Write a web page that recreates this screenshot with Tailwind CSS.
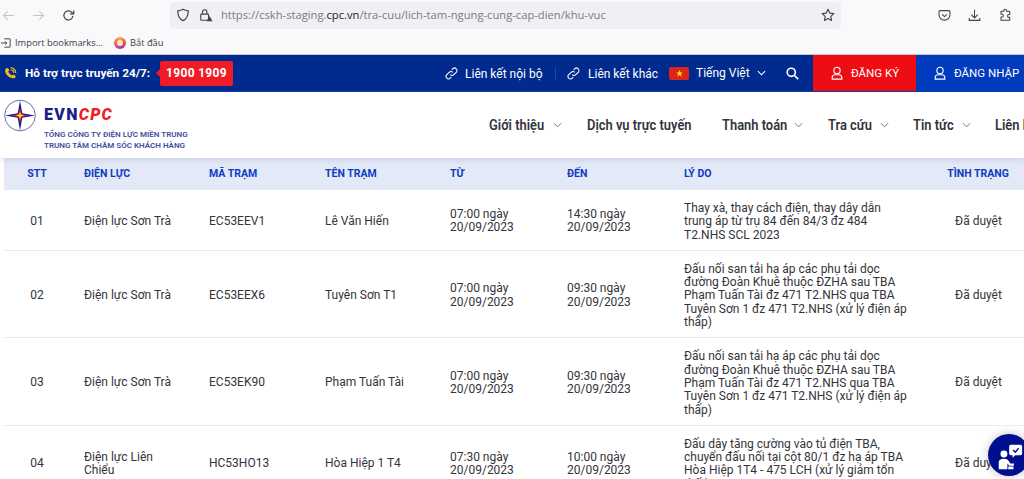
<!DOCTYPE html>
<html lang="vi">
<head>
    <meta charset="UTF-8">
    <title>Lịch tạm ngừng cung cấp điện</title>
    <script src="https://cdn.jsdelivr.net/npm/@tailwindcss/browser@4"></script>
</head>
<body class="bg-white font-['Roboto',sans-serif] antialiased">
    <div class="relative w-[1024px] h-[479px] overflow-hidden">
        <!-- Browser toolbar -->
        <div class="h-[55px] bg-[#f9f9fb] border-b border-[#c8c8cc] font-['Open_Sans',sans-serif]">
            <div class="h-[29px] pt-px flex items-center">
                <div class="w-[170px] pl-[2px] flex items-center text-[#6f6f73]">
                    <svg class="w-[13px] h-[13px] text-[#c4c4c8]" viewBox="0 0 16 16" fill="none" stroke="currentColor" stroke-width="1.3"><path d="M15 8H2M7 3 2 8l5 5"/></svg>
                    <svg class="w-[13px] h-[13px] ml-[17px] text-[#c4c4c8]" viewBox="0 0 16 16" fill="none" stroke="currentColor" stroke-width="1.3"><path d="M1 8h13M9 3l5 5-5 5"/></svg>
                    <svg class="w-[13px] h-[13px] ml-[17px] text-[#444]" viewBox="0 0 16 16" fill="none" stroke="currentColor" stroke-width="1.4"><path d="M13.5 8.5A5.6 5.6 0 1 1 12 4l2 2"/><path d="M14.5 1.5V6H10"/></svg>
                </div>
                <div class="w-[671px] h-[27px] bg-[#f0f0f4] rounded-[4px] flex items-center">
                    <svg class="w-[14px] h-[14px] ml-[6px] text-[#444]" viewBox="0 0 16 16" fill="none" stroke="currentColor" stroke-width="1.4"><path d="M8 1.5c2 1.2 4 1.6 6 1.7 0 5.5-1.800 9.500-6 11.300C3.800 12.700 2 8.700 2 3.200c2-.1 4-.5 6-1.700Z"/></svg>
                    <svg class="w-[14px] h-[14px] ml-[9px] text-[#444]" viewBox="0 0 16 16" fill="none" stroke="currentColor" stroke-width="1.3"><rect x="2" y="7" width="9" height="7" rx="1"/><path d="M4 7V4.500a2.500 2.500 0 0 1 5 0V7"/><path d="M12 9l3.500 6h-7Z" fill="currentColor" stroke="none"/></svg>
                    <span class="ml-[8px] text-[11.200px] text-[#7b7b80] whitespace-nowrap">https://cskh-staging.<span class="text-[#1c1c20]">cpc.vn</span>/tra-cuu/lich-tam-ngung-cung-cap-dien/khu-vuc</span>
                    <svg class="w-[14px] h-[14px] ml-auto mr-[6px] text-[#444]" viewBox="0 0 16 16" fill="none" stroke="currentColor" stroke-width="1.300" stroke-linejoin="round"><path d="m8 1.500 2 4.300 4.700.6-3.500 3.200.9 4.700L8 12l-4.100 2.300.9-4.700L1.300 6.400 6 5.800Z"/></svg>
                </div>
                <svg class="w-[13px] h-[13px] ml-[97px] text-[#444]" viewBox="0 0 16 16" fill="none" stroke="currentColor" stroke-width="1.300"><path d="M2.500 2h11c.8 0 1.200.5 1.200 1.200V7A6.700 6.700 0 0 1 1.300 7V3.200C1.300 2.500 1.700 2 2.500 2Z"/><path d="m5 6.500 3 2.800 3-2.800"/></svg>
                <svg class="w-[13px] h-[13px] ml-[17px] text-[#444]" viewBox="0 0 16 16" fill="none" stroke="currentColor" stroke-width="1.300"><path d="M8 1v9.500M4 7l4 4 4-4M1.500 11v3h13v-3"/></svg>
                <svg class="w-[13px] h-[14px] ml-[18px] text-[#444]" viewBox="0 0 16 16" fill="none" stroke="currentColor" stroke-width="1.300" stroke-linejoin="round"><path d="M6 3.500V2.600a1.600 1.600 0 0 1 3.200 0v.9h4v4h-1a1.700 1.700 0 0 0 0 3.400h1v3.600H2.500v-4h1.200a1.700 1.700 0 0 0 0-3.400H2.500V3.500Z"/></svg>
            </div>
            <div class="h-[25px] pt-[3px] flex items-center text-[9.300px] text-[#3c3c40] whitespace-nowrap">
                <svg class="w-[10px] h-[10px] ml-px text-[#333]" viewBox="0 0 12 12" fill="none" stroke="currentColor" stroke-width="1.100"><path d="M4 1h6.500a.5.500 0 0 1 .5.500v9a.5.500 0 0 1-.5.500H4M0 6h7M5 4l2 2-2 2"/></svg>
                <span class="ml-[4px] w-[99px]">Import bookmarks...</span>
                <span class="w-[12px] h-[12px] rounded-full bg-[conic-gradient(#f5b042,#e8484a,#a23bb8,#ee6a5b,#f5b042)] flex items-center justify-center"><span class="w-[6px] h-[6px] rounded-full bg-[#fbe3c8]"></span></span>
                <span class="ml-[4px]">Bắt đầu</span>
            </div>
        </div>

        <!-- Top bar -->
        <div class="h-[37px] bg-[#002a8e] border-b border-[#0a3db0] flex items-center text-white whitespace-nowrap">
            <svg class="w-[13px] h-[14px] ml-[4px] text-[#f6b91c]" viewBox="0 0 16 16" fill="none" stroke="currentColor"><path d="M2 3c-1.500 2 0 6 2.500 8.500S11 15.500 13.500 14c1-.7 1.200-1.600.8-2.200l-2-1.700c-.6-.4-1.200-.2-1.700.5-.4.500-.9.500-1.500.1C7.600 9.700 6.300 8.300 5.500 7c-.3-.6-.3-1.100.3-1.500.7-.5.800-1.100.4-1.700L4.600 2c-.7-.6-1.700-.2-2.600 1Z" fill="currentColor" stroke="none"/><path d="M8 1.500A6.500 6.500 0 0 1 14.500 8M8 4a4 4 0 0 1 4 4" stroke-width="1.500"/></svg>
            <span class="ml-[8px] mt-px w-[126px] text-[11.800px] font-bold">Hỗ trợ trực truyến 24/7:</span>
            <span class="relative ml-[9px] w-[73px] h-[25px] rounded-[2px] bg-[#ee1c25] flex items-center justify-center text-[12px] font-bold tracking-[0.3px]">
                1900 1909
                <span class="absolute left-[-4px] top-[8px] border-y-[4px] border-r-[4px] border-y-transparent border-r-[#ee1c25]"></span>
            </span>
            <svg class="w-[13px] h-[13px] ml-[212px]" viewBox="0 0 16 16" fill="none" stroke="currentColor" stroke-width="1.300"><path d="M6.500 9.500a3 3 0 0 0 4.300 0l3-3a3 3 0 0 0-4.300-4.300L8.200 3.500"/><path d="M9.500 6.500a3 3 0 0 0-4.300 0l-3 3a3 3 0 0 0 4.300 4.300l1.300-1.300"/></svg>
            <span class="ml-[7px] mt-px text-[12px] w-[90px]">Liên kết nội bộ</span>
            <span class="w-px h-[13px] bg-[#23479f]"></span>
            <svg class="w-[13px] h-[13px] ml-[11px]" viewBox="0 0 16 16" fill="none" stroke="currentColor" stroke-width="1.300"><path d="M6.500 9.500a3 3 0 0 0 4.300 0l3-3a3 3 0 0 0-4.300-4.300L8.200 3.500"/><path d="M9.500 6.500a3 3 0 0 0-4.300 0l-3 3a3 3 0 0 0 4.300 4.300l1.300-1.300"/></svg>
            <span class="ml-[8px] mt-px text-[12px] w-[81px]">Liên kết khác</span>
            <span class="w-[20px] h-[13px] rounded-[2px] bg-[#da251d] flex items-center justify-center">
                <svg class="w-[7px] h-[7px]" viewBox="0 0 10 10"><path d="m5 0 1.400 3.500H10L7.100 5.800 8.100 9.500 5 7.300 1.900 9.500l1-3.700L0 3.500h3.600Z" fill="#ffdd00"/></svg>
            </span>
            <span class="ml-[7px] text-[12px] w-[61px]">Tiếng Việt</span>
            <svg class="w-[9px] h-[6px]" viewBox="0 0 10 6" fill="none" stroke="currentColor" stroke-width="1.200"><path d="m1 1 4 4 4-4"/></svg>
            <svg class="w-[13px] h-[13px] ml-[20px]" viewBox="0 0 16 16" fill="none" stroke="currentColor" stroke-width="2"><circle cx="6.500" cy="6.500" r="5"/><path d="m10.500 10.500 4.500 4.500"/></svg>
            <div class="ml-[14px] w-[103px] h-full bg-[#ee0d12] flex items-center pl-[17px]">
                <svg class="w-[14px] h-[14px]" viewBox="0 0 16 16" fill="none" stroke="currentColor" stroke-width="1.300"><circle cx="8" cy="5" r="3.600"/><path d="M2.500 15v-1.500c0-2 1.500-3.500 3.500-3.500h4c2 0 3.500 1.500 3.500 3.500V15Z"/></svg>
                <span class="ml-[7px] mt-px text-[11.500px]">ĐĂNG KÝ</span>
            </div>
            <div class="w-[108px] h-full bg-[#003bbd] flex items-center pl-[17px]">
                <svg class="w-[14px] h-[14px]" viewBox="0 0 16 16" fill="none" stroke="currentColor" stroke-width="1.300"><circle cx="8" cy="5" r="3.600"/><path d="M2.500 15v-1.500c0-2 1.500-3.500 3.500-3.500h4c2 0 3.500 1.500 3.500 3.500V15Z"/></svg>
                <span class="ml-[7px] mt-px text-[11.500px]">ĐĂNG NHẬP</span>
            </div>
        </div>

        <!-- Logo and menu -->
        <div class="relative z-10 h-[66px] bg-white flex shadow-[0_2px_6px_rgba(60,70,120,0.15)] whitespace-nowrap">
            <div class="w-[489px] shrink-0 flex">
                <svg class="w-[32px] h-[33px] ml-[4px] mt-[7px] shrink-0" viewBox="0 0 32 32">
                    <circle cx="16" cy="16" r="15.300" fill="#fff" stroke="#5a5fa8" stroke-width="0.900"/>
                    <path d="M16 1 18.300 13.700 31 16 18.300 18.300 16 31 13.700 18.300 1 16 13.700 13.700Z" fill="#1b1f8c"/>
                    <path d="M16 8.500 17.400 14.600 23.500 16 17.400 17.400 16 23.500 14.600 17.400 8.500 16 14.600 14.600Z" fill="#e8262a"/>
                    <path d="M16 12 16.900 15.100 20 16 16.900 16.900 16 20 15.100 16.900 12 16 15.100 15.100Z" fill="#ffd91f"/>
                </svg>
                <div class="ml-[8px]">
                    <div class="mt-[14px] h-[17px] text-[16px] leading-[17px] font-black tracking-[1.300px] text-[#1b1f8c]">EVN<span class="italic text-[#ee1c25]">CPC</span></div>
                    <div class="mt-[6px] text-[8px] leading-[11px] font-semibold text-[#3f4d9e]">TỔNG CÔNG TY ĐIỆN LỰC MIỀN TRUNG</div>
                    <div class="text-[8px] leading-[11px] font-semibold text-[#3f4d9e]">TRUNG TÂM CHĂM SÓC KHÁCH HÀNG</div>
                </div>
            </div>
            <div class="flex items-center text-[#33343a] text-[15px] font-semibold">
                <span class="w-[64px] inline-block origin-left scale-x-[0.86]">Giới thiệu</span>
                <svg class="w-[9px] h-[6px] text-[#666]" viewBox="0 0 10 6" fill="none" stroke="currentColor"><path d="m1 1 4 4 4-4"/></svg>
                <span class="w-[135px] ml-[25px] inline-block origin-left scale-x-[0.86]">Dịch vụ trực tuyến</span>
                <span class="w-[72px] inline-block origin-left scale-x-[0.86]">Thanh toán</span>
                <svg class="w-[9px] h-[6px] text-[#666]" viewBox="0 0 10 6" fill="none" stroke="currentColor"><path d="m1 1 4 4 4-4"/></svg>
                <span class="w-[52px] ml-[25px] inline-block origin-left scale-x-[0.86]">Tra cứu</span>
                <svg class="w-[9px] h-[6px] text-[#666]" viewBox="0 0 10 6" fill="none" stroke="currentColor"><path d="m1 1 4 4 4-4"/></svg>
                <span class="w-[49px] ml-[24px] inline-block origin-left scale-x-[0.86]">Tin tức</span>
                <svg class="w-[9px] h-[6px] text-[#666]" viewBox="0 0 10 6" fill="none" stroke="currentColor"><path d="m1 1 4 4 4-4"/></svg>
                <span class="ml-[24px] inline-block origin-left scale-x-[0.86]">Liên hệ</span>
            </div>
        </div>

        <!-- Outage table -->
        <table class="ml-[4px] w-[1020px] table-fixed border-collapse text-[12px] leading-[13.300px] text-[#33343a]">
            <colgroup>
                <col class="w-[80px]"><col class="w-[125px]"><col class="w-[116px]"><col class="w-[125px]">
                <col class="w-[117px]"><col class="w-[117px]"><col class="w-[246px]"><col class="w-[94px]">
            </colgroup>
            <thead class="bg-[#e4e9f8] text-[10.500px] font-bold text-[#0b3cc1]">
                <tr class="h-[32px] text-left">
                    <th class="pr-[14px] text-center">STT</th>
                    <th>ĐIỆN LỰC</th>
                    <th>MÃ TRẠM</th>
                    <th>TÊN TRẠM</th>
                    <th>TỪ</th>
                    <th>ĐẾN</th>
                    <th>LÝ DO</th>
                    <th class="pl-[2px] text-center">TÌNH TRẠNG</th>
                </tr>
            </thead>
            <tbody>
                <tr class="border-b border-[#ececf0]">
                    <td class="pt-[3px] pr-[14px] text-center">01</td>
                    <td class="pt-[3px] pr-[25px]">Điện lực Sơn Trà</td>
                    <td class="pt-[3px]">EC53EEV1</td>
                    <td class="pt-[3px]">Lê Văn Hiến</td>
                    <td class="pt-[3px] pr-[30px]">07:00 ngày 20/09/2023</td>
                    <td class="pt-[3px] pr-[30px]">14:30 ngày 20/09/2023</td>
                    <td class="pt-[12px] pb-[8px] pr-[18px]">Thay xà, thay cách điện, thay dây dẫn<br>trung áp từ trụ 84 đến 84/3 đz 484<br>T2.NHS SCL 2023</td>
                    <td class="pt-[3px] pl-[3px] text-center">Đã duyệt</td>
                </tr>
                <tr class="border-b border-[#ececf0]">
                    <td class="pt-[3px] pr-[14px] text-center">02</td>
                    <td class="pt-[3px] pr-[25px]">Điện lực Sơn Trà</td>
                    <td class="pt-[3px]">EC53EEX6</td>
                    <td class="pt-[3px]">Tuyên Sơn T1</td>
                    <td class="pt-[3px] pr-[30px]">07:00 ngày 20/09/2023</td>
                    <td class="pt-[3px] pr-[30px]">09:30 ngày 20/09/2023</td>
                    <td class="pt-[12px] pb-[8px] pr-[18px]">Đấu nối san tải hạ áp các phụ tải dọc<br>đường Đoàn Khuê thuộc ĐZHA sau TBA<br>Phạm Tuấn Tài đz 471 T2.NHS qua TBA<br>Tuyên Sơn 1 đz 471 T2.NHS (xử lý điện áp<br>thấp)</td>
                    <td class="pt-[3px] pl-[3px] text-center">Đã duyệt</td>
                </tr>
                <tr class="border-b border-[#ececf0]">
                    <td class="pt-[3px] pr-[14px] text-center">03</td>
                    <td class="pt-[3px] pr-[25px]">Điện lực Sơn Trà</td>
                    <td class="pt-[3px]">EC53EK90</td>
                    <td class="pt-[3px]">Phạm Tuấn Tài</td>
                    <td class="pt-[3px] pr-[30px]">07:00 ngày 20/09/2023</td>
                    <td class="pt-[3px] pr-[30px]">09:30 ngày 20/09/2023</td>
                    <td class="pt-[12px] pb-[8px] pr-[18px]">Đấu nối san tải hạ áp các phụ tải dọc<br>đường Đoàn Khuê thuộc ĐZHA sau TBA<br>Phạm Tuấn Tài đz 471 T2.NHS qua TBA<br>Tuyên Sơn 1 đz 471 T2.NHS (xử lý điện áp<br>thấp)</td>
                    <td class="pt-[3px] pl-[3px] text-center">Đã duyệt</td>
                </tr>
                <tr class="border-b border-[#ececf0]">
                    <td class="pt-[3px] pr-[14px] text-center">04</td>
                    <td class="pt-[3px] pr-[25px]">Điện lực Liên Chiểu</td>
                    <td class="pt-[3px]">HC53HO13</td>
                    <td class="pt-[3px]">Hòa Hiệp 1 T4</td>
                    <td class="pt-[3px] pr-[30px]">07:30 ngày 20/09/2023</td>
                    <td class="pt-[3px] pr-[30px]">10:00 ngày 20/09/2023</td>
                    <td class="pt-[12px] pb-[8px] pr-[18px]">Đấu dây tăng cường vào tủ điện TBA,<br>chuyển đấu nối tại cột 80/1 đz hạ áp TBA<br>Hòa Hiệp 1T4 - 475 LCH (xử lý giảm tổn<br>thất)</td>
                    <td class="pt-[3px] pl-[3px] text-center">Đã duyệt</td>
                </tr>
            </tbody>
        </table>

        <!-- Chat widget -->
        <div class="absolute left-[988px] top-[434px] w-[42px] h-[42px] rounded-full bg-[#000f8f] shadow-[0_0_8px_rgba(0,0,0,0.25)] overflow-hidden">
            <svg class="w-[26px] h-[26px] mt-[10px] ml-[9px]" viewBox="0 0 30 30" fill="#fff">
                <path d="M16 1h11a2 2 0 0 1 2 2v8a2 2 0 0 1-2 2h-6l-3 3v-3h-2a2 2 0 0 1-2-2V3a2 2 0 0 1 2-2Z"/>
                <path d="m18.500 7 2.500 2.500 4-4.500" fill="none" stroke="#000f8f" stroke-width="1.600"/>
                <circle cx="8" cy="11.500" r="4"/>
                <path d="M2 29v-8c0-2.500 2-4 6-4 3 0 4.500 1 5.500 2.500l2 3h4v2.500h-5.500L12 22.500V29Z"/>
                <path d="M13 26h6v3h-6Z"/>
            </svg>
        </div>
    </div>
</body>
</html>
